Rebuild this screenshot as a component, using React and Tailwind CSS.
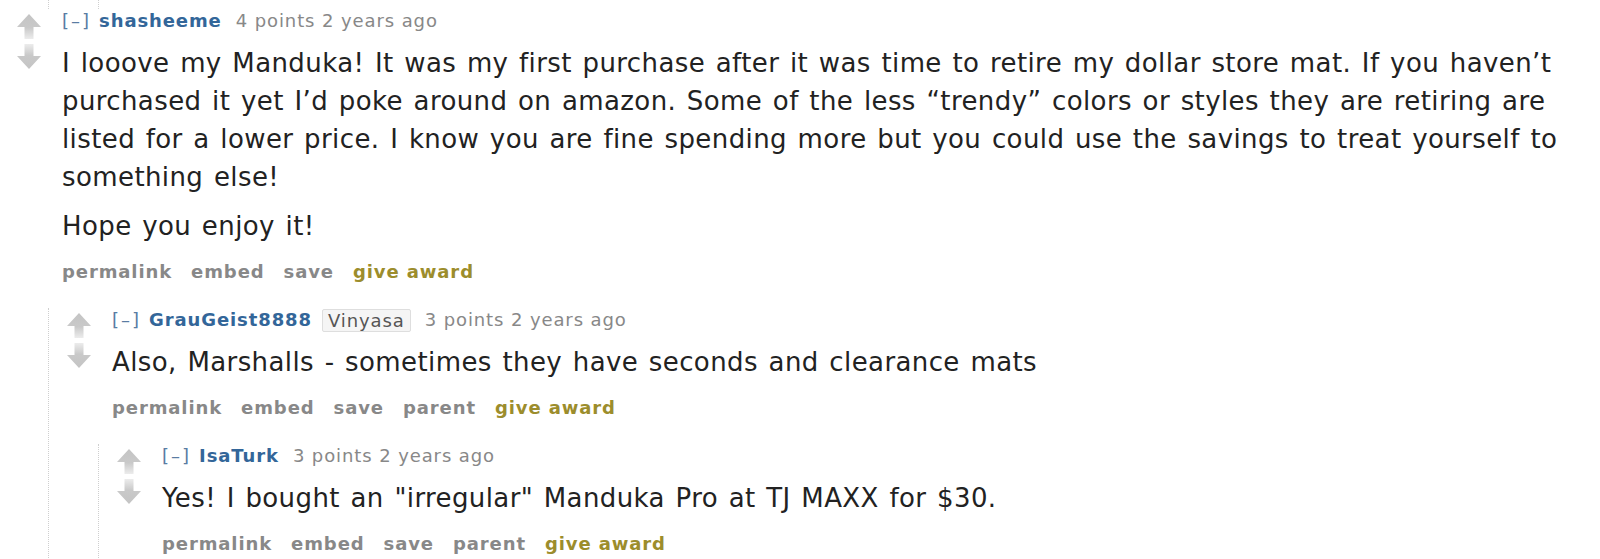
import React from 'react';

const font = { fontFamily: '"DejaVu Sans", Verdana, sans-serif' };

// Vote arrow drawn like old reddit's grey sprite
const Arrow = ({ down = false }) => (
  <svg width="26" height="27" viewBox="0 0 26 27" className={down ? 'rotate-180' : ''}>
    <defs>
      <linearGradient id={down ? 'fadeDown' : 'fadeUp'} x1="0" y1="0" x2="0" y2="1">
        <stop offset="0" stopColor="#c4c4c4" />
        <stop offset="0.55" stopColor="#c9c9c9" />
        <stop offset="1" stopColor="#ececec" />
      </linearGradient>
    </defs>
    <path
      d="M13 1 L25 14 L17.5 14 L17.5 26 L8.5 26 L8.5 14 L1 14 Z"
      fill={`url(#${down ? 'fadeDown' : 'fadeUp'})`}
    />
  </svg>
);

const Buttons = ({ parent }) => (
  <ul className="flex items-center gap-[19px] text-[18px] tracking-[0.9px] font-bold text-[#888] leading-[24px]">
    <li>permalink</li>
    <li>embed</li>
    <li>save</li>
    {parent && <li>parent</li>}
    <li className="text-[#9c8d2c]">give award</li>
  </ul>
);

const Comment = ({ author, flair, points, nested, paragraphs, children }) => (
  <div
    className={
      nested
        ? 'ml-[49px] border-l border-dotted border-[#cfcfcf]'
        : 'ml-[-2px] border-l border-transparent'
    }
  >
    <div className="flex">
      <div className="ml-[17px] w-[26px] flex flex-col gap-[3px] pt-[4px]">
        <Arrow />
        <Arrow down />
      </div>
      <div className="ml-[20px] flex-1 min-w-0">
        <p className="flex items-center text-[18px] tracking-[0.9px] leading-[24px] text-[#888] whitespace-nowrap">
          <span className="text-[#5a7ca3] tracking-[2px]">[–]</span>
          <span className="ml-[8px] font-bold text-[#336699]">{author}</span>
          {flair && (
            <span className="ml-[10px] px-[5px] border border-[#dedede] bg-[#f5f5f5] rounded-[2px] text-[#555] leading-[21px]">
              {flair}
            </span>
          )}
          <span className="ml-[14px]">{points} points 2 years ago</span>
        </p>
        <div className="mt-[11px] text-[26px] tracking-[0.4px] [word-spacing:2px] leading-[38px] text-[#222] whitespace-nowrap">
          {paragraphs.map((p, i) => (
            <p key={i} className={i > 0 ? 'mt-[11px]' : ''}>
              {p.map((line, j) => (
                <React.Fragment key={j}>
                  {j > 0 && <br />}
                  {line}
                </React.Fragment>
              ))}
            </p>
          ))}
        </div>
        <div className="mt-[15px] pb-[24px]">
          <Buttons parent={nested} />
        </div>
      </div>
    </div>
    {children}
  </div>
);

export default function App() {
  return (
    <div className="w-[1600px] h-[559px] overflow-hidden bg-white" style={font}>
      {/* tails of the thread above */}
      <div className="h-[9px] ml-[48px] border-l border-dotted border-[#cfcfcf]">
        <div className="h-full ml-[49px] border-l border-dotted border-[#cfcfcf]" />
      </div>
      <Comment
        author="shasheeme"
        points={4}
        paragraphs={[
          [
            'I looove my Manduka! It was my first purchase after it was time to retire my dollar store mat. If you haven’t',
            'purchased it yet I’d poke around on amazon. Some of the less “trendy” colors or styles they are retiring are',
            'listed for a lower price. I know you are fine spending more but you could use the savings to treat yourself to',
            'something else!',
          ],
          ['Hope you enjoy it!'],
        ]}
      >
        <Comment
          nested
          author="GrauGeist8888"
          flair="Vinyasa"
          points={3}
          paragraphs={[['Also, Marshalls - sometimes they have seconds and clearance mats']]}
        >
          <Comment
            nested
            author="IsaTurk"
            points={3}
            paragraphs={[['Yes! I bought an "irregular" Manduka Pro at TJ MAXX for $30.']]}
          />
        </Comment>
      </Comment>
    </div>
  );
}
